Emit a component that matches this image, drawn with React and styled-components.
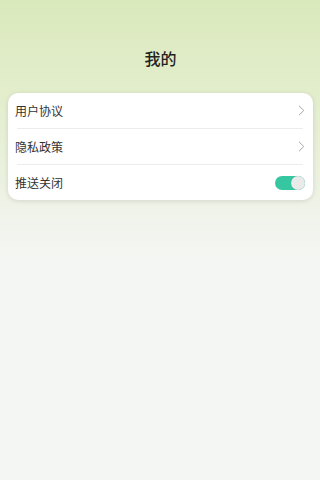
import styled, { createGlobalStyle } from "styled-components";

const GlobalStyle = createGlobalStyle`
  html, body {
    margin: 0;
    padding: 0;
  }
  body {
    font-family: "Noto Sans CJK SC", "Noto Sans", sans-serif;
  }
`;

const Page = styled.div`
  min-height: 480px;
  background: linear-gradient(
    180deg,
    #dae9bc 0%,
    #e2edcb 18%,
    #eaf1dd 35%,
    #f1f4ed 47%,
    #f4f6f3 55%,
    #f4f6f3 100%
  );
  padding: 0 7px 0 8px;
  box-sizing: border-box;
`;

const Header = styled.div`
  padding-top: 47px;
  height: 93px;
  box-sizing: border-box;
  display: flex;
  justify-content: center;
`;

const Title = styled.h1`
  margin: 0;
  font-size: 16px;
  line-height: 22px;
  font-weight: 500;
  color: #222;
`;

const Card = styled.div`
  background: #fff;
  border-radius: 10px;
  box-shadow: 0 1px 5px rgba(0, 0, 0, 0.12);
  overflow: hidden;
`;

const Row = styled.div`
  height: 35px;
  display: flex;
  align-items: center;
  justify-content: space-between;
  padding: 0 8px 0 7px;
`;

const Divider = styled.div`
  height: 1px;
  background: #ececec;
  margin: 0 10px 0 9px;
`;

const Label = styled.span`
  font-size: 12px;
  color: #333;
`;

const Chevron = styled.svg`
  width: 7px;
  height: 11px;
`;

const Toggle = styled.div`
  position: relative;
  width: 30px;
  height: 14px;
  border-radius: 7px;
  background: ${(p) => (p.$on ? "#36c7a0" : "#ddd")};
`;

const Knob = styled.div`
  position: absolute;
  top: 0;
  right: 0;
  width: 14px;
  height: 14px;
  border-radius: 50%;
  background: #e9eaea;
  box-shadow: 0 0 1px rgba(0, 0, 0, 0.2);
`;

function Arrow() {
  return (
    <Chevron viewBox="0 0 7 11">
      <path d="M1 0.8 L5.8 5.5 L1 10.2" fill="none" stroke="#a6a6a6" strokeWidth="1" />
    </Chevron>
  );
}

export default function App() {
  return (
    <>
      <GlobalStyle />
      <Page>
        <Header>
          <Title>我的</Title>
        </Header>
        <Card>
          <Row>
            <Label>用户协议</Label>
            <Arrow />
          </Row>
          <Divider />
          <Row>
            <Label>隐私政策</Label>
            <Arrow />
          </Row>
          <Divider />
          <Row>
            <Label>推送关闭</Label>
            <Toggle $on>
              <Knob />
            </Toggle>
          </Row>
        </Card>
      </Page>
    </>
  );
}
